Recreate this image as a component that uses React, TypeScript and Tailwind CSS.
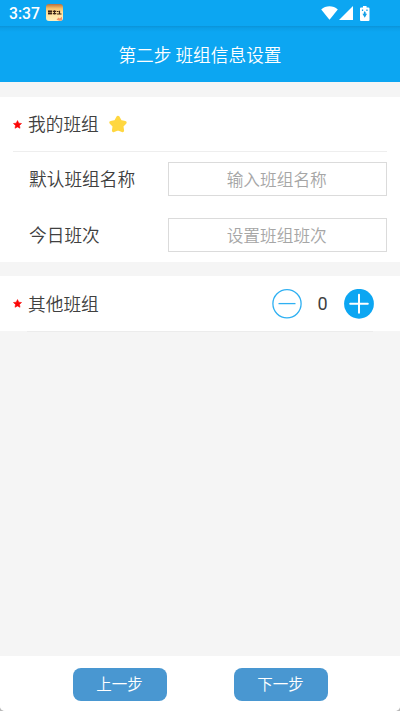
import React from "react";

const STAR = "M12 1.5l3.3 6.9 7.5 1-5.5 5.2 1.4 7.5L12 18.5l-6.7 3.6 1.4-7.5L1.2 9.4l7.5-1z";

function RequiredMark() {
  return (
    <svg className="mr-[6px] block h-[9px] w-[9px] shrink-0" viewBox="0 0 24 24">
      <path d={STAR} fill="#fb0505" stroke="#fb0505" strokeWidth="1.5" strokeLinejoin="round" />
    </svg>
  );
}

function AppBadge() {
  return (
    <svg className="ml-[5px] block h-[18px] w-[18px]" viewBox="0 0 18 18">
      <defs>
        <linearGradient id="badge" x1="0" y1="0" x2="0" y2="1">
          <stop offset="0" stopColor="#b86f3c" />
          <stop offset="0.25" stopColor="#f3bd68" />
          <stop offset="0.5" stopColor="#ffe09a" />
          <stop offset="1" stopColor="#fff0bd" />
        </linearGradient>
      </defs>
      <rect x="0" y="0" width="17" height="17" rx="3" fill="url(#badge)" />
      <path d="M2 7.3h4M2 9.7h4M3 6.3v4.2M5 6.3v4.2M6.8 7.3h3.5M6.8 9.7h3.5M8.5 6.3v4.2M11 7.5h1.5M11 10h4.5M13.5 6.8v3.7" stroke="#3b2214" strokeWidth="1.2" />
      <path d="M10.5 15.8l2-2.3 1.2 1 2.3-1.8v3.8l-2.5.2z" fill="#f07a55" opacity="0.8" />
    </svg>
  );
}

function StatusBar() {
  return (
    <div className="flex h-[26px] items-center bg-[#0ca6f2] pl-[9px] pr-[30px] text-white">
      <span className="w-[31.5px] pt-[2px] font-['Roboto',sans-serif] text-[15.7px] font-medium leading-none">3:37</span>
      <AppBadge />
      <div className="ml-auto flex items-center">
        <svg className="block h-[14px] w-[17px]" viewBox="0 0 17 14">
          <path d="M0.2 3.4C2.6 1.3 5.4 0.3 8.5 0.3s5.9 1 8.3 3.1L8.5 13.7z" fill="#fff" />
        </svg>
        <svg className="ml-[1px] block h-[14px] w-[14px]" viewBox="0 0 14 14">
          <path d="M14 0v14H0z" fill="#fff" />
        </svg>
        <svg className="ml-[7px] mr-[0.5px] block h-[15px] w-[9.5px]" viewBox="0 0 9 15" preserveAspectRatio="none">
          <path d="M2.8 0h3.4v1.5H8q1 0 1 1V14q0 1-1 1H1q-1 0-1-1V2.5q0-1 1-1h1.8z" fill="#fff" />
          <path d="M4.5 4.9L5.4 6.5v1.3h1.3L4.5 11.8 2.3 7.8h1.3V6.5z" fill="#159fe6" />
          <path d="M1.8 3.6h1.2v1.3h-1.2zM6 3.6h1.2v1.3h-1.2z" fill="#159fe6" />
        </svg>
      </div>
    </div>
  );
}

function Field({ label, placeholder }: { label: string; placeholder: string }) {
  return (
    <div className="flex items-center pl-[29px] pr-[13.5px]">
      <span className="w-[139px] text-[17.7px] leading-none">{label}</span>
      <div className="flex h-[34px] flex-1 items-center justify-center border border-[#dbdbdb] pr-px text-[16.7px] leading-none text-[#a6a6a6]">
        {placeholder}
      </div>
    </div>
  );
}

export default function App() {
  return (
    <div className="flex h-[711px] w-[400px] flex-col bg-[#b9b9b9] font-['Noto_Sans_CJK_SC',sans-serif] font-[350] text-[#404040]">
      <div className="flex flex-1 flex-col overflow-hidden rounded-b-[5px] bg-[#f5f5f5]">
        <StatusBar />
        <header className="flex h-14 items-center justify-center bg-[#0ca6f2] bg-[linear-gradient(to_bottom,#0b93d8_0px,#0b9ee7_2px,#0ca6f2_6px)] pt-px text-[17.7px] leading-none text-white">
          第二步 班组信息设置
        </header>

        <section className="mt-[15px] h-[165px] bg-white">
          <div className="ml-[13px] mr-[13.5px] flex h-[54.5px] items-center border-b border-[#eeeeee] pt-[0.5px]">
            <RequiredMark />
            <span className="text-[17.7px] leading-none">我的班组</span>
            <svg className="ml-[10.5px] block h-[18px] w-[18px]" viewBox="0 0 24 24">
              <path d="M12 3.2l3.1 5.6 6.2 1.2-4.3 4.6.9 6.2L12 18.3l-5.9 2.5.9-6.2L2.7 10l6.2-1.2z" fill="#ffd740" stroke="#ffd740" strokeWidth="4.4" strokeLinejoin="round" />
            </svg>
          </div>
          <div className="flex flex-col gap-[22px] pt-[10.5px]">
            <Field label="默认班组名称" placeholder="输入班组名称" />
            <Field label="今日班次" placeholder="设置班组班次" />
          </div>
        </section>

        <section className="mt-[14px] h-[55px] bg-white">
          <div className="flex h-full items-center pl-[13px] pr-[26.5px]">
            <RequiredMark />
            <span className="text-[17.7px] leading-none">其他班组</span>
            <svg className="ml-auto block h-[30px] w-[30px]" viewBox="0 0 30 30" fill="none" stroke="#2fb0f2">
              <circle cx="15" cy="14.8" r="14.1" strokeWidth="1.3" />
              <path d="M6.5 14.6h17" strokeWidth="1.3" />
            </svg>
            <span className="w-[42px] pt-px text-center font-['Roboto',sans-serif] text-[18px] font-normal leading-none">0</span>
            <svg className="block h-[30px] w-[30px]" viewBox="0 0 30 30" fill="none">
              <circle cx="15" cy="14.8" r="14.9" fill="#0ca6f2" />
              <path d="M6.2 14.8h17.6M15 5.8v18" stroke="#fff" strokeWidth="2" strokeLinecap="round" />
            </svg>
          </div>
        </section>
        <div className="ml-[27px] mr-[27px] h-px bg-[#ececec]" />

        <footer className="mt-auto flex h-[55px] items-start justify-center gap-[67px] bg-white pt-[11.5px] text-[15.5px] leading-none text-white">
          <button className="h-[33px] w-[94px] rounded-[8px] bg-[#4997d1]">上一步</button>
          <button className="h-[33px] w-[94px] rounded-[8px] bg-[#4997d1]">下一步</button>
        </footer>
      </div>
    </div>
  );
}
